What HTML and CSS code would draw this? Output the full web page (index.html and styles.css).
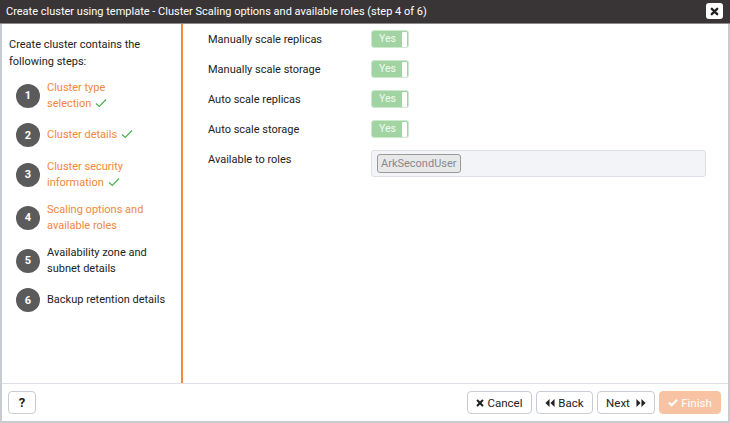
FILE: index.html
```html
<!DOCTYPE html>
<html>
<head>
<meta charset="utf-8">
<link rel="stylesheet" href="styles.css">
</head>
<body>
<div class="dialog">
  <div class="header">
    <span class="title">Create cluster using template - Cluster Scaling options and available roles (step 4 of 6)</span>
    <button class="close" aria-label="Close">
      <svg width="9" height="9" viewBox="0 0 10 10"><path d="M2 2 L8 8 M8 2 L2 8" stroke="#222" stroke-width="2.6" stroke-linecap="round"/></svg>
    </button>
  </div>
  <div class="body">
    <div class="steps">
      <p class="intro">Create cluster contains the following steps:</p>
      <ol class="list">
        <li class="step done"><span class="num">1</span><span class="label">Cluster type <span class="nw">selection <svg class="check" width="12" height="10" viewBox="0 0 12 10"><path d="M1 5.5 L4.3 8.5 L11 1.5" fill="none" stroke="#4caf50" stroke-width="1.2"/></svg></span></span></li>
        <li class="step done"><span class="num">2</span><span class="label">Cluster <span class="nw">details <svg class="check" width="12" height="10" viewBox="0 0 12 10"><path d="M1 5.5 L4.3 8.5 L11 1.5" fill="none" stroke="#4caf50" stroke-width="1.2"/></svg></span></span></li>
        <li class="step done"><span class="num">3</span><span class="label">Cluster security <span class="nw">information <svg class="check" width="12" height="10" viewBox="0 0 12 10"><path d="M1 5.5 L4.3 8.5 L11 1.5" fill="none" stroke="#4caf50" stroke-width="1.2"/></svg></span></span></li>
        <li class="step current"><span class="num">4</span><span class="label">Scaling options and available roles</span></li>
        <li class="step"><span class="num">5</span><span class="label">Availability zone and subnet details</span></li>
        <li class="step"><span class="num">6</span><span class="label">Backup retention details</span></li>
      </ol>
    </div>
    <div class="form">
      <div class="row"><span class="flabel">Manually scale replicas</span><span class="toggle"><span class="ttext">Yes</span><span class="handle"></span></span></div>
      <div class="row"><span class="flabel">Manually scale storage</span><span class="toggle"><span class="ttext">Yes</span><span class="handle"></span></span></div>
      <div class="row"><span class="flabel">Auto scale replicas</span><span class="toggle"><span class="ttext">Yes</span><span class="handle"></span></span></div>
      <div class="row"><span class="flabel">Auto scale storage</span><span class="toggle"><span class="ttext">Yes</span><span class="handle"></span></span></div>
      <div class="row top"><span class="flabel">Available to roles</span><div class="roles"><span class="chip">ArkSecondUser</span></div></div>
    </div>
  </div>
  <div class="footer">
    <button class="btn help">?</button>
    <div class="actions">
      <button class="btn cancel"><svg width="8" height="8" viewBox="0 0 10 10"><path d="M2 2 L8 8 M8 2 L2 8" stroke="#222" stroke-width="2.6" stroke-linecap="round"/></svg>Cancel</button>
      <button class="btn back"><svg width="10" height="10" viewBox="0 0 11 10"><path d="M5 0.5 L0.5 5 L5 9.5 Z M10.5 0.5 L6 5 L10.5 9.5 Z" fill="#222"/></svg>Back</button>
      <button class="btn next">Next<svg width="10" height="10" viewBox="0 0 11 10"><path d="M0.5 0.5 L5 5 L0.5 9.5 Z M6 0.5 L10.5 5 L6 9.5 Z" fill="#222"/></svg></button>
      <button class="btn finish"><svg width="10" height="9" viewBox="0 0 11 9"><path d="M1 4.5 L4 7.5 L10 1.5" fill="none" stroke="#fff" stroke-width="2.2"/></svg>Finish</button>
    </div>
  </div>
</div>
</body>
</html>
```
FILE: styles.css
```css
* { box-sizing: border-box; }
html, body { margin: 0; padding: 0; }
body {
  width: 730px;
  height: 423px;
  font-family: Roboto, "Liberation Sans", sans-serif;
  font-size: 11px;
  color: #222;
  background: #fff;
  overflow: hidden;
}
.dialog {
  width: 730px;
  height: 423px;
  display: flex;
  flex-direction: column;
  border: 2px solid #c8cbd0;
  border-top: none;
}
.header {
  height: 24px;
  margin: 0 -2px;
  background: #393536;
  border-bottom: 1px solid #8a8a8a;
  display: flex;
  align-items: center;
  justify-content: space-between;
  padding: 0 7px 1px 6px;
  color: #fff;
}
.title {
  font-size: 11px;
  white-space: nowrap;
}
.close {
  width: 17px;
  height: 16px;
  background: #fff;
  border: none;
  border-radius: 3px;
  padding: 0;
  display: flex;
  align-items: center;
  justify-content: center;
}
.body {
  flex: 1;
  display: flex;
  min-height: 0;
}
.steps {
  width: 181px;
  flex: none;
  border-right: 2px solid #f28a3c;
  padding: 12px 0 0 7px;
}
.intro {
  margin: 0 0 10px;
  line-height: 17px;
  color: #222;
}
.list {
  list-style: none;
  margin: 0;
  padding: 0 0 0 7px;
  display: flex;
  flex-direction: column;
  gap: 12px;
}
.step {
  display: flex;
  align-items: center;
  gap: 7px;
}
.num {
  flex: none;
  width: 24px;
  height: 24px;
  border-radius: 50%;
  background: #5b5b5b;
  color: #fff;
  font-weight: bold;
  font-size: 11px;
  display: flex;
  align-items: center;
  justify-content: center;
}
.label {
  max-width: 119px;
  line-height: 15.5px;
  color: #222;
}
.nw { white-space: nowrap; }
.step.done .label, .step.current .label { color: #f2873c; }
.check { margin-left: 1px; vertical-align: -1px; }
.form {
  flex: 1;
  padding: 6px 22px 0 25px;
  display: flex;
  flex-direction: column;
  gap: 12px;
}
.row {
  display: flex;
  align-items: center;
  min-height: 18px;
}
.row.top { align-items: flex-start; }
.row.top .flabel { padding-top: 3px; }
.flabel {
  width: 163px;
  flex: none;
  color: #222;
}
.toggle {
  width: 38px;
  height: 18px;
  background: #a1d4a2;
  border: 1px solid #cde8cd;
  border-radius: 3px;
  display: flex;
  align-items: center;
  justify-content: space-between;
  padding: 0 1px 0 0;
}
.ttext {
  flex: 1;
  text-align: center;
  color: #f4fbf4;
  font-size: 10.5px;
  margin-top: -1px;
  padding-left: 1px;
}
.handle {
  width: 5px;
  height: 15px;
  background: #fff;
  border-radius: 1px;
}
.roles {
  flex: 1;
  height: 27px;
  background: #f3f4f8;
  border: 1px solid #dde0e6;
  border-radius: 3px;
  display: flex;
  align-items: center;
  padding: 0 5px;
}
.chip {
  background: #e8e8e8;
  border: 1px solid #9a9a9a;
  border-radius: 3px;
  color: #888;
  padding: 1px 3px;
  line-height: 15px;
  font-size: 11px;
}
.footer {
  height: 38px;
  border-top: 1px solid #dde0e6;
  display: flex;
  align-items: center;
  justify-content: space-between;
  padding: 0 7px 0 6px;
}
.actions {
  display: flex;
  gap: 4px;
}
.btn {
  height: 23px;
  background: #fff;
  border: 1px solid #c8ccd4;
  border-radius: 4px;
  font-family: Roboto, "Liberation Sans", sans-serif;
  font-size: 11.5px;
  color: #222;
  display: flex;
  align-items: center;
  justify-content: center;
  gap: 3px;
  padding: 0;
}
.help {
  width: 28px;
  font-weight: bold;
  font-size: 13px;
}
.cancel { width: 65px; }
.back { width: 57px; }
.next { width: 58px; gap: 6px; }
.finish {
  width: 62px;
  background: #f8c3a3;
  border-color: #f8c3a3;
  color: #fff;
}
```
